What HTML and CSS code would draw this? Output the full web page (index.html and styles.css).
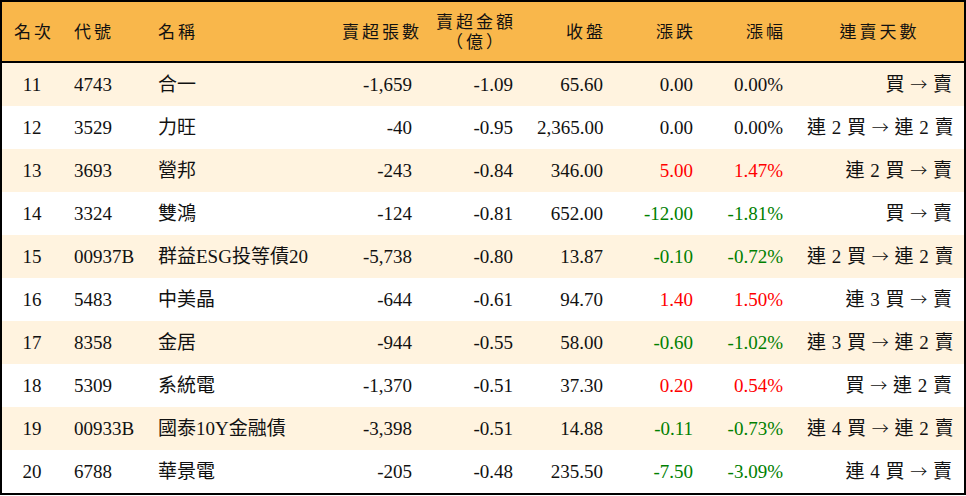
FILE: index.html
```html
<!DOCTYPE html>
<html lang="zh-Hant">
<head>
<meta charset="utf-8">
<title>賣超排行</title>
<link rel="stylesheet" href="styles.css">
</head>
<body>
<table class="rank">
  <colgroup>
    <col class="c-rank"><col class="c-code"><col class="c-name"><col class="c-vol"><col class="c-amt"><col class="c-close"><col class="c-chg"><col class="c-pct"><col class="c-days">
  </colgroup>
  <thead>
    <tr>
      <th class="center">名次</th>
      <th class="left">代號</th>
      <th class="left">名稱</th>
      <th class="right">賣超張數</th>
      <th class="right"><span class="stack">賣超金額<br>（億）</span></th>
      <th class="right">收盤</th>
      <th class="right">漲跌</th>
      <th class="right">漲幅</th>
      <th class="center">連賣天數</th>
    </tr>
  </thead>
  <tbody>
    <tr><td class="center">11</td><td>4743</td><td>合一</td><td class="right">-1,659</td><td class="right">-1.09</td><td class="right">65.60</td><td class="right">0.00</td><td class="right">0.00%</td><td class="right days">買 <span class="arrow">→</span> 賣</td></tr>
    <tr><td class="center">12</td><td>3529</td><td>力旺</td><td class="right">-40</td><td class="right">-0.95</td><td class="right">2,365.00</td><td class="right">0.00</td><td class="right">0.00%</td><td class="right days">連 2 買 <span class="arrow">→</span> 連 2 賣</td></tr>
    <tr><td class="center">13</td><td>3693</td><td>營邦</td><td class="right">-243</td><td class="right">-0.84</td><td class="right">346.00</td><td class="right up">5.00</td><td class="right up">1.47%</td><td class="right days">連 2 買 <span class="arrow">→</span> 賣</td></tr>
    <tr><td class="center">14</td><td>3324</td><td>雙鴻</td><td class="right">-124</td><td class="right">-0.81</td><td class="right">652.00</td><td class="right down">-12.00</td><td class="right down">-1.81%</td><td class="right days">買 <span class="arrow">→</span> 賣</td></tr>
    <tr><td class="center">15</td><td>00937B</td><td>群益ESG投等債20</td><td class="right">-5,738</td><td class="right">-0.80</td><td class="right">13.87</td><td class="right down">-0.10</td><td class="right down">-0.72%</td><td class="right days">連 2 買 <span class="arrow">→</span> 連 2 賣</td></tr>
    <tr><td class="center">16</td><td>5483</td><td>中美晶</td><td class="right">-644</td><td class="right">-0.61</td><td class="right">94.70</td><td class="right up">1.40</td><td class="right up">1.50%</td><td class="right days">連 3 買 <span class="arrow">→</span> 賣</td></tr>
    <tr><td class="center">17</td><td>8358</td><td>金居</td><td class="right">-944</td><td class="right">-0.55</td><td class="right">58.00</td><td class="right down">-0.60</td><td class="right down">-1.02%</td><td class="right days">連 3 買 <span class="arrow">→</span> 連 2 賣</td></tr>
    <tr><td class="center">18</td><td>5309</td><td>系統電</td><td class="right">-1,370</td><td class="right">-0.51</td><td class="right">37.30</td><td class="right up">0.20</td><td class="right up">0.54%</td><td class="right days">買 <span class="arrow">→</span> 連 2 賣</td></tr>
    <tr><td class="center">19</td><td>00933B</td><td>國泰10Y金融債</td><td class="right">-3,398</td><td class="right">-0.51</td><td class="right">14.88</td><td class="right down">-0.11</td><td class="right down">-0.73%</td><td class="right days">連 4 買 <span class="arrow">→</span> 連 2 賣</td></tr>
    <tr><td class="center">20</td><td>6788</td><td>華景電</td><td class="right">-205</td><td class="right">-0.48</td><td class="right">235.50</td><td class="right down">-7.50</td><td class="right down">-3.09%</td><td class="right days">連 4 買 <span class="arrow">→</span> 賣</td></tr>
  </tbody>
</table>
</body>
</html>
```
FILE: styles.css
```css
html, body {
  margin: 0;
  padding: 0;
  background: #ffffff;
}

.rank {
  width: 966px;
  border-collapse: separate;
  border-spacing: 0;
  table-layout: fixed;
  border: 2px solid #000;
  font-family: "Liberation Serif", "Noto Sans CJK TC", serif;
  font-size: 19px;
  color: #111;
}

.c-rank { width: 60px; }
.c-code { width: 84px; }
.c-name { width: 184px; }
.c-vol { width: 94px; }
.c-amt { width: 101px; }
.c-close { width: 90px; }
.c-chg { width: 90px; }
.c-pct { width: 90px; }
.c-days { width: 169px; }

.rank th {
  background: #f9b74b;
  height: 61px;
  box-sizing: border-box;
  border-bottom: 2px solid #000;
  font-weight: normal;
  font-size: 17px;
  letter-spacing: 3px;
  line-height: 20px;
  padding: 2px 12px 0;
  vertical-align: middle;
  white-space: nowrap;
}

.rank th.right { padding-right: 9px; }

.stack {
  display: inline-block;
  text-align: center;
}

.rank td {
  height: 43px;
  box-sizing: border-box;
  padding: 0 12px;
  vertical-align: middle;
  white-space: nowrap;
  line-height: 22px;
}

.rank tbody tr:nth-child(odd) td {
  background: #fff3df;
}

.rank td.days {
  padding-right: 12px;
  word-spacing: 1px;
}

.arrow {
  font-family: "Noto Sans CJK TC", sans-serif;
  font-weight: 300;
  font-size: 17px;
}

.left { text-align: left; }
.right { text-align: right; }
.center { text-align: center; }

.up { color: #ff0000; }
.down { color: #008000; }
```
